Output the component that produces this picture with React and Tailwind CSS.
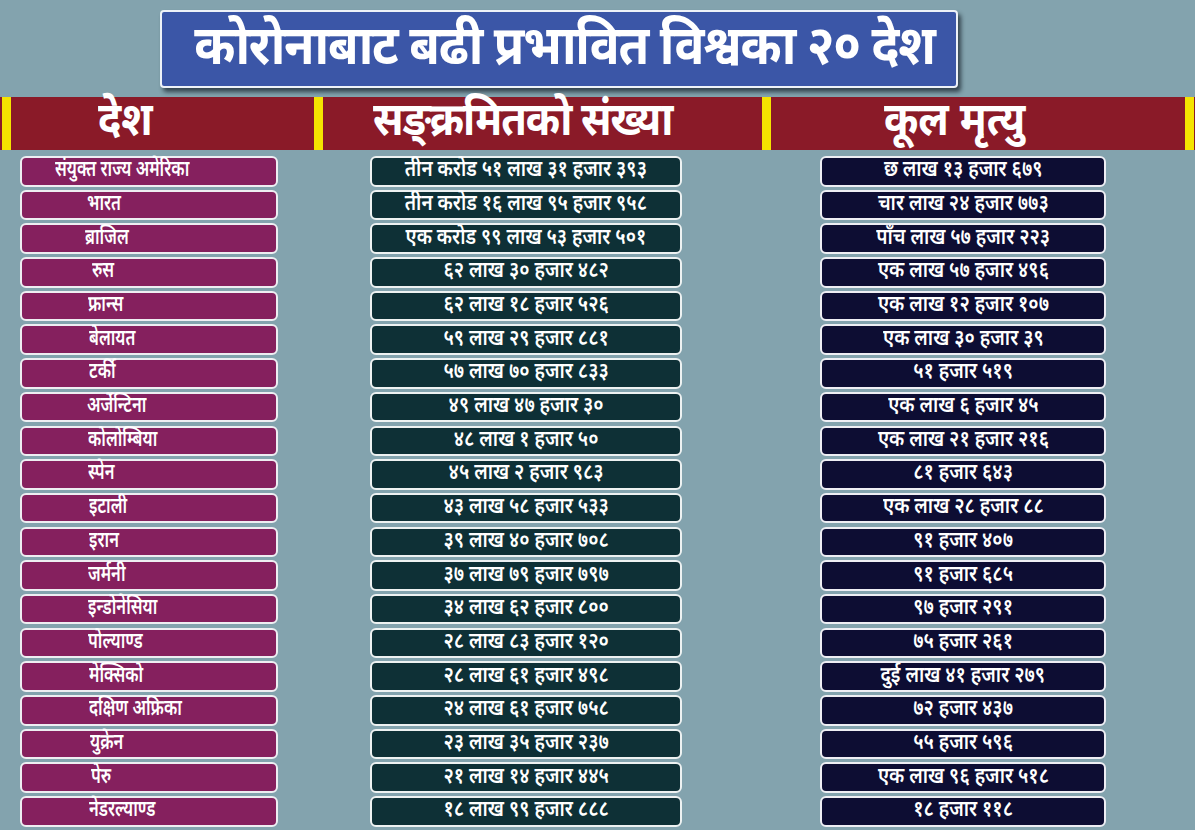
import React from "react";

const rows = [
  { country: "संयुक्त राज्य अमेरिका", pad: "pl-[33px]", cases: "तीन करोड ५१ लाख ३१ हजार ३९३", deaths: "छ लाख १३ हजार ६७९" },
  { country: "भारत", pad: "pl-[65px]", cases: "तीन करोड १६ लाख ९५ हजार ९५८", deaths: "चार लाख २४ हजार ७७३" },
  { country: "ब्राजिल", pad: "pl-[63px]", cases: "एक करोड ९९ लाख ५३ हजार ५०१", deaths: "पाँच लाख ५७ हजार २२३" },
  { country: "रुस", pad: "pl-[70px]", cases: "६२ लाख ३० हजार ४८२", deaths: "एक लाख ५७ हजार ४९६" },
  { country: "फ्रान्स", pad: "pl-[66px]", cases: "६२ लाख १८ हजार ५२६", deaths: "एक लाख १२ हजार १०७" },
  { country: "बेलायत", pad: "pl-[67px]", cases: "५९ लाख २९ हजार ८८१", deaths: "एक लाख ३० हजार ३९" },
  { country: "टर्की", pad: "pl-[67px]", cases: "५७ लाख ७०  हजार ८३३", deaths: "५१ हजार ५१९" },
  { country: "अर्जेन्टिना", pad: "pl-[65px]", cases: "४९ लाख ४७  हजार ३०", deaths: "एक लाख ६ हजार ४५" },
  { country: "कोलोम्बिया", pad: "pl-[66px]", cases: "४८ लाख १ हजार ५०", deaths: "एक लाख २१ हजार २१६" },
  { country: "स्पेन", pad: "pl-[66px]", cases: "४५ लाख २  हजार ९८३", deaths: "८१ हजार ६४३" },
  { country: "इटाली", pad: "pl-[67px]", cases: "४३ लाख ५८ हजार ५३३", deaths: "एक लाख २८ हजार ८८" },
  { country: "इरान", pad: "pl-[67px]", cases: "३९ लाख ४० हजार ७०८", deaths: "९१ हजार ४०७" },
  { country: "जर्मनी", pad: "pl-[66px]", cases: "३७ लाख ७९ हजार ७९७", deaths: "९१ हजार ६८५" },
  { country: "इन्डोनेसिया", pad: "pl-[66px]", cases: "३४ लाख ६२  हजार ८००", deaths: "९७ हजार २९१" },
  { country: "पोल्याण्ड", pad: "pl-[66px]", cases: "२८ लाख ८३ हजार १२०", deaths: "७५ हजार २६१" },
  { country: "मेक्सिको", pad: "pl-[67px]", cases: "२८ लाख ६१ हजार ४९८", deaths: "दुई लाख ४१ हजार २७९" },
  { country: "दक्षिण अफ्रिका", pad: "pl-[67px]", cases: "२४ लाख ६१ हजार ७५८", deaths: "७२ हजार ४३७" },
  { country: "युक्रेन", pad: "pl-[68px]", cases: "२३  लाख ३५ हजार २३७", deaths: "५५ हजार ५९६" },
  { country: "पेरु", pad: "pl-[69px]", cases: "२१ लाख १४ हजार ४४५", deaths: "एक लाख ९६ हजार ५१८" },
  { country: "नेडरल्याण्ड", pad: "pl-[67px]", cases: "१८ लाख ९९ हजार ८८८", deaths: "१८ हजार ११८" },
];

const font = { fontFamily: '"Noto Sans Devanagari", "Noto Sans", "DejaVu Sans", sans-serif' };

function Divider() {
  return <div className="h-full w-[9px] bg-[#f5e400]" />;
}

export default function App() {
  return (
    <div
      className="w-[1195px] h-[830px] overflow-hidden bg-[#83a3ae] text-white"
      style={font}
    >
      {/* Title */}
      <div className="pt-[10px] pl-[160px]">
        <div className="w-[798px] h-[78px] rounded-[4px] border-2 border-[#eef2f8] bg-[#3b56a7] shadow-[3px_4px_4px_rgba(20,30,40,0.7)] flex items-center justify-center pl-[10px] pt-[4px]">
          <span className="inline-block text-[54px] font-bold leading-none tracking-tight scale-x-92 whitespace-nowrap">
            कोरोनाबाट बढी प्रभावित विश्वका २० देश
          </span>
        </div>
      </div>

      {/* Header bar */}
      <div className="mt-[9px] h-[53px] bg-[#8a1a28] flex items-stretch pl-[2px]">
        <Divider />
        <div className="w-[303px] flex items-center pl-[87px] text-[46px] font-bold leading-none">
          <span className="inline-block origin-left scale-x-90">देश</span>
        </div>
        <Divider />
        <div className="w-[439px] flex items-center pl-[50px] text-[46px] font-bold leading-none">
          <span className="inline-block origin-left scale-x-90 whitespace-nowrap tracking-tight">सङ्क्रमितको संख्या</span>
        </div>
        <Divider />
        <div className="w-[414px] flex items-center pl-[113px] text-[46px] font-bold leading-none">
          <span className="inline-block origin-left scale-x-90 whitespace-nowrap">कूल मृत्यु</span>
        </div>
        <Divider />
      </div>

      {/* Rows */}
      <div className="mt-[6px] flex flex-col gap-[3.2px]">
        {rows.map((r) => (
          <div key={r.country} className="flex h-[30.5px] pl-[20px] text-[22px] font-semibold leading-none">
            <div
              className={`w-[258px] rounded-[6px] border-2 border-[#eeeef2] bg-[#85205e] flex items-center ${r.pad}`}
            >
              <span className="inline-block origin-left scale-x-75 whitespace-nowrap">{r.country}</span>
            </div>
            <div className="ml-[92px] w-[312px] rounded-[6px] border-2 border-[#eef2f2] bg-[#0e3036] flex items-center justify-center">
              <span className="inline-block scale-x-86 whitespace-nowrap">{r.cases}</span>
            </div>
            <div className="ml-[138px] w-[286px] rounded-[6px] border-2 border-[#eeeef4] bg-[#0d0d33] flex items-center justify-center">
              <span className="inline-block scale-x-86 whitespace-nowrap">{r.deaths}</span>
            </div>
          </div>
        ))}
      </div>
    </div>
  );
}
